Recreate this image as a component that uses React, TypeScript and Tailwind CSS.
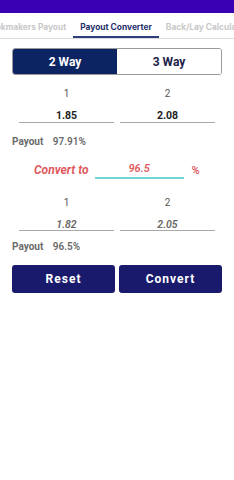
import React from 'react';

const Cell = ({ label, value, italic }: { label: string; value: string; italic?: boolean }) => (
    <div className="flex flex-col items-center leading-none">
        <span className="text-[10px] text-[#555555] leading-none">{label}</span>
        <div className="mt-[12px] w-full border-b border-[#a9a9a9] pb-0 text-center text-[10.5px] leading-none">
            <span className={italic ? 'italic font-semibold text-[#666666]' : 'font-bold text-[#222222]'}>{value}</span>
        </div>
    </div>
);

const App: React.FC = () => {
    return (
        <div className="w-[234px] h-[480px] bg-white overflow-hidden" style={{ fontFamily: 'Roboto, "Liberation Sans", sans-serif' }}>
            <div className="h-[13px] bg-[#3a00b4]" />
            <div className="overflow-hidden border-b border-[#dcdcdc]">
                <div className="flex -ml-[22px] whitespace-nowrap text-[8.4px] font-bold leading-[14px]" style={{ fontFamily: 'Inter, Roboto, sans-serif' }}>
                    <div className="px-[7px] pt-[7px] pb-[4px] text-[#c8c8c8]">Bookmakers Payout</div>
                    <div className="px-[7px] pt-[7px] pb-[2px] text-[#1f2f6b] border-b-2 border-[#2c3f7a]">Payout Converter</div>
                    <div className="px-[7px] pt-[7px] pb-[4px] text-[#c8c8c8]">Back/Lay Calculator</div>
                </div>
            </div>

            <div className="px-[12px] pt-[9px]">
                <div className="flex h-[27px] rounded-[3px] border border-[#9a9a9a] overflow-hidden">
                    <div className="flex-1 flex items-center justify-center bg-[#0c2462] text-white text-[12px] font-bold">2 Way</div>
                    <div className="flex-1 flex items-center justify-center bg-white text-[#1d1d4a] text-[12px] font-bold">3 Way</div>
                </div>
            </div>

            <div className="grid grid-cols-2 gap-[6px] px-[19px] mt-[14px]">
                <Cell label="1" value="1.85" />
                <Cell label="2" value="2.08" />
            </div>

            <div className="px-[12px] mt-[14px] text-[10px] font-bold text-[#6a6a6a] leading-none">
                Payout <span className="ml-[7px] font-semibold">97.91%</span>
            </div>

            <div className="flex items-end mt-[16px] pl-[34px] leading-none">
                <span className="text-[12px] font-bold italic text-[#de5a5e] leading-none pb-[3px]">Convert to</span>
                <div className="ml-[6px] w-[89px] border-b-2 border-[#72d6d6] text-center pb-[3px] text-[11px] leading-none">
                    <span className="font-semibold italic text-[#de5a5e]">96.5</span>
                </div>
                <span className="ml-[8px] text-[11px] font-semibold text-[#de5a5e] leading-none pb-[3px]">%</span>
            </div>

            <div className="grid grid-cols-2 gap-[6px] px-[19px] mt-[19px]">
                <Cell label="1" value="1.82" italic />
                <Cell label="2" value="2.05" italic />
            </div>

            <div className="px-[12px] mt-[11px] text-[10px] font-bold text-[#6a6a6a] leading-none">
                Payout <span className="ml-[7px] font-semibold">96.5%</span>
            </div>

            <div className="grid grid-cols-2 gap-[4px] px-[12px] mt-[13px]">
                <button className="h-[28px] rounded-[3px] bg-[#1a1a6c] text-white text-[12px] font-bold tracking-[1px]">Reset</button>
                <button className="h-[28px] rounded-[3px] bg-[#1a1a6c] text-white text-[12px] font-bold tracking-[1px]">Convert</button>
            </div>
        </div>
    );
};

export default App;
